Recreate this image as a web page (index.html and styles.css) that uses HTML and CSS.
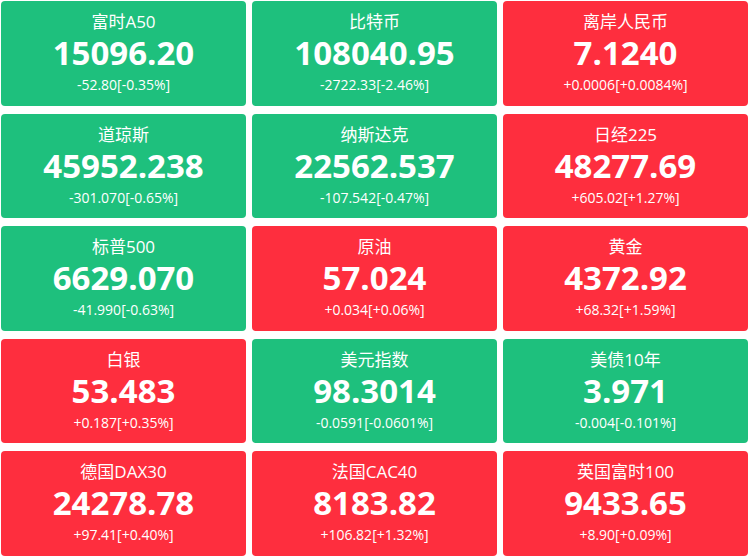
FILE: index.html
```html
<!DOCTYPE html>
<html lang="zh-CN">
<head>
<meta charset="utf-8">
<title>行情</title>
<link rel="stylesheet" href="styles.css">
</head>
<body>
<div class="grid">
  <div class="card down"><div class="name">富时A50</div><div class="price">15096.20</div><div class="chg">-52.80[-0.35%]</div></div>
  <div class="card down"><div class="name">比特币</div><div class="price">108040.95</div><div class="chg">-2722.33[-2.46%]</div></div>
  <div class="card up"><div class="name">离岸人民币</div><div class="price">7.1240</div><div class="chg">+0.0006[+0.0084%]</div></div>
  <div class="card down"><div class="name">道琼斯</div><div class="price">45952.238</div><div class="chg">-301.070[-0.65%]</div></div>
  <div class="card down"><div class="name">纳斯达克</div><div class="price">22562.537</div><div class="chg">-107.542[-0.47%]</div></div>
  <div class="card up"><div class="name">日经225</div><div class="price">48277.69</div><div class="chg">+605.02[+1.27%]</div></div>
  <div class="card down"><div class="name">标普500</div><div class="price">6629.070</div><div class="chg">-41.990[-0.63%]</div></div>
  <div class="card up"><div class="name">原油</div><div class="price">57.024</div><div class="chg">+0.034[+0.06%]</div></div>
  <div class="card up"><div class="name">黄金</div><div class="price">4372.92</div><div class="chg">+68.32[+1.59%]</div></div>
  <div class="card up"><div class="name">白银</div><div class="price">53.483</div><div class="chg">+0.187[+0.35%]</div></div>
  <div class="card down"><div class="name">美元指数</div><div class="price">98.3014</div><div class="chg">-0.0591[-0.0601%]</div></div>
  <div class="card down"><div class="name">美债10年</div><div class="price">3.971</div><div class="chg">-0.004[-0.101%]</div></div>
  <div class="card up"><div class="name">德国DAX30</div><div class="price">24278.78</div><div class="chg">+97.41[+0.40%]</div></div>
  <div class="card up"><div class="name">法国CAC40</div><div class="price">8183.82</div><div class="chg">+106.82[+1.32%]</div></div>
  <div class="card up"><div class="name">英国富时100</div><div class="price">9433.65</div><div class="chg">+8.90[+0.09%]</div></div>
</div>
</body>
</html>
```
FILE: styles.css
```css
html, body {
  margin: 0;
  padding: 0;
  background: #ffffff;
}
body {
  font-family: "Open Sans", "Noto Sans CJK SC", sans-serif;
  color: #ffffff;
}
.grid {
  display: grid;
  grid-template-columns: repeat(3, 1fr);
  grid-auto-rows: 104.5px;
  column-gap: 6px;
  row-gap: 8px;
  padding: 1px 0 0 1px;
  width: 747px;
}
.card {
  border-radius: 4px;
  text-align: center;
  padding-top: 9px;
  box-sizing: border-box;
}
.card.down { background: #1ec07d; }
.card.up { background: #fe2e3e; }
.name {
  font-size: 17px;
  line-height: 23px;
}
.price {
  font-size: 33px;
  font-weight: 700;
  line-height: 40px;
}
.chg {
  font-size: 14px;
  line-height: 23px;
}
```
